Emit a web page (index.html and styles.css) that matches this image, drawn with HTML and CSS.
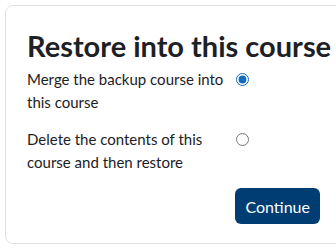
FILE: index.html
```html
<!DOCTYPE html>
<html lang="en">
<head>
    <meta charset="UTF-8">
    <meta name="viewport" content="width=device-width, initial-scale=1.0">
    <title>Restore into this course</title>
    <link rel="stylesheet" href="styles.css">
</head>
<body>
    <div class="card">
        <h2>Restore into this course</h2>
        <div class="option">
            <label for="merge">Merge the backup course into this course</label>
            <input type="radio" id="merge" name="target" checked>
        </div>
        <div class="option">
            <label for="delete">Delete the contents of this course and then restore</label>
            <input type="radio" id="delete" name="target">
        </div>
        <div class="actions">
            <button class="continue">Continue</button>
        </div>
    </div>
</body>
</html>
```

FILE: styles.css
```css
body {
    margin: 0;
    padding: 5px 0 0 5px;
    font-family: 'Lato', 'Noto Sans', sans-serif;
    color: #1d2125;
    background: #fff;
}

.card {
    width: 360px;
    height: 239px;
    box-sizing: border-box;
    border: 1px solid #dee2e6;
    border-radius: 8px;
    padding: 23px 21px 0 21px;
}

h2 {
    margin: 0 0 5px 0;
    font-size: 29px;
    font-weight: 700;
    line-height: 34px;
    white-space: nowrap;
}

.option {
    display: flex;
    align-items: flex-start;
    margin-bottom: 15px;
    font-size: 15px;
    line-height: 22.5px;
}

.option label {
    width: 209px;
}

.option input {
    margin: 5px 0 0 0;
    width: 13px;
    height: 13px;
    accent-color: #0f6cbf;
}

.actions {
    width: 293px;
    display: flex;
    justify-content: flex-end;
}

.continue {
    background-color: #003d73;
    color: #fff;
    border: none;
    border-radius: 6px;
    padding: 0 10px;
    height: 36px;
    font-family: inherit;
    font-size: 16px;
}
```
